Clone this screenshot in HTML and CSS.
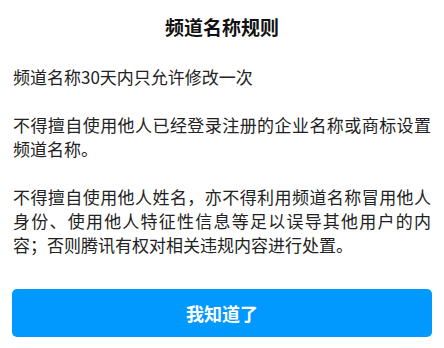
FILE: index.html
```html
<!DOCTYPE html>
<html lang="zh-CN">
<head>
<meta charset="utf-8">
<title>频道名称规则</title>
<link rel="stylesheet" href="styles.css">
</head>
<body>
<div class="dialog">
  <h1 class="title">频道名称规则</h1>
  <div class="content">
    <p class="para">频道名称30天内只允许修改一次</p>
    <p class="para">不得擅自使用他人已经登录注册的企业名称或商标设置频道名称。</p>
    <p class="para">不得擅自使用他人姓名，亦不得利用频道名称冒用他人身份、使用他人特征性信息等足以误导其他用户的内容；否则腾讯有权对相关违规内容进行处置。</p>
  </div>
  <button class="confirm" type="button">我知道了</button>
</div>
</body>
</html>
```
FILE: styles.css
```css
html, body {
  margin: 0;
  padding: 0;
  background: #ffffff;
}
body {
  font-family: "Noto Sans CJK SC", "Noto Sans", sans-serif;
  color: #1c1c1c;
}
.dialog {
  width: 444px;
  height: 348px;
  box-sizing: border-box;
  padding: 14px 12px 0 12px;
  display: flex;
  flex-direction: column;
}
.title {
  margin: 0;
  font-size: 19px;
  line-height: 26px;
  font-weight: 700;
  text-align: center;
  color: #111111;
}
.content {
  margin-top: 25px;
  padding: 0 1px;
}
.para {
  margin: 0 0 24px 0;
  font-size: 17px;
  line-height: 24px;
  text-align: justify;
  color: #222222;
}
.para:last-child {
  margin-bottom: 0;
}
.confirm {
  margin-top: 32px;
  height: 48px;
  border: none;
  border-radius: 5px;
  background: #0299ff;
  color: #ffffff;
  font-family: "Noto Sans CJK SC", "Noto Sans", sans-serif;
  font-size: 18px;
  font-weight: 700;
  width: 100%;
  padding: 0;
}
```
